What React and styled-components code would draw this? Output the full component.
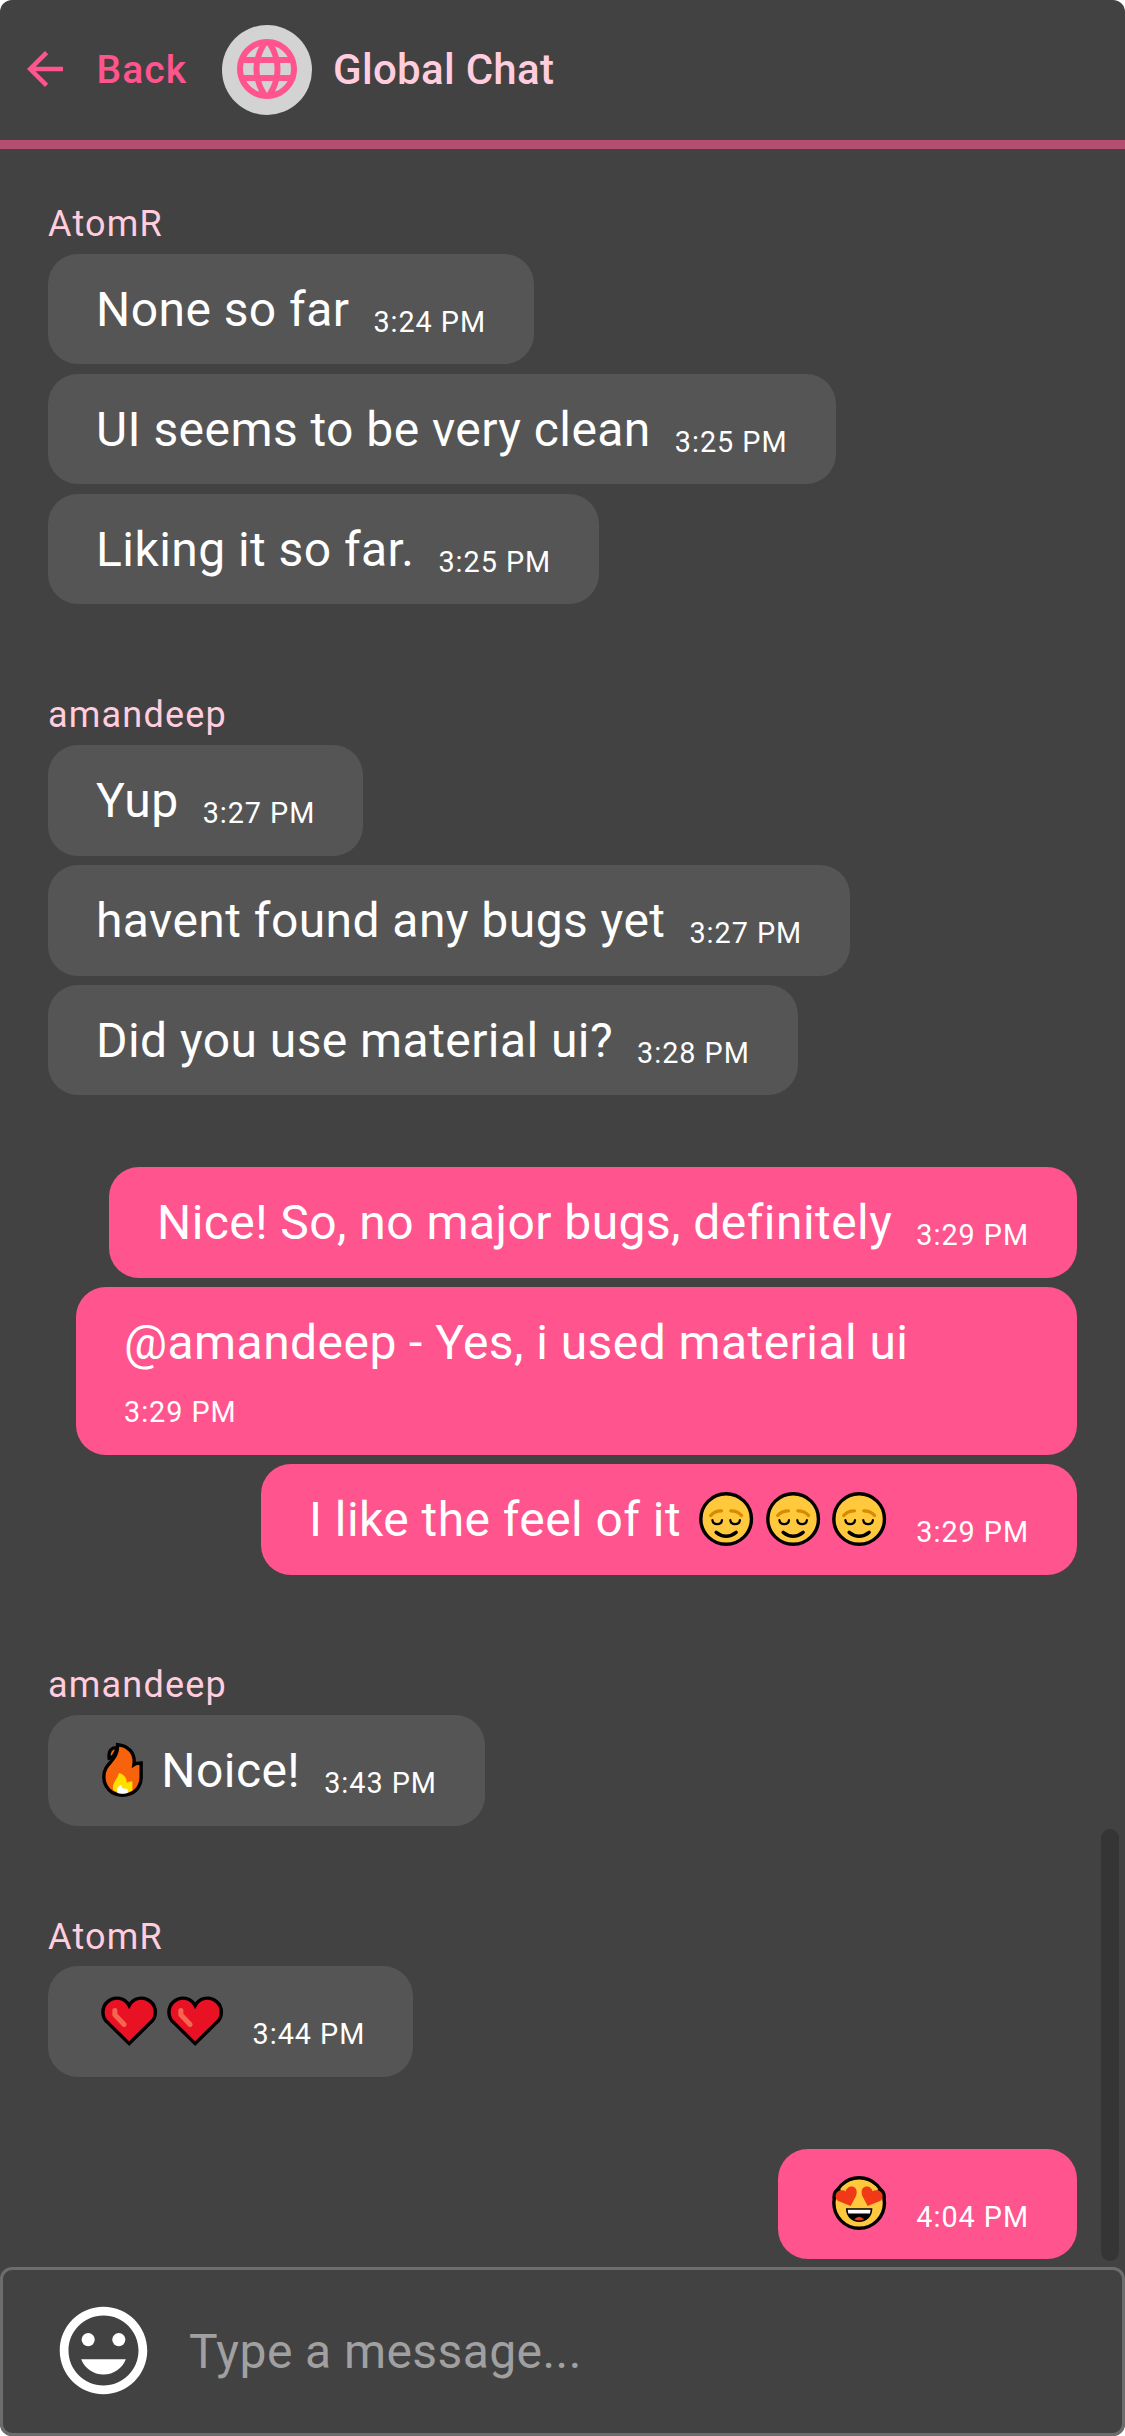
import React from 'react';
import styled, { createGlobalStyle } from 'styled-components';

const GlobalStyle = createGlobalStyle`
  *, *::before, *::after { box-sizing: border-box; }
  body { margin: 0; background: #fff; font-family: Roboto, "Liberation Sans", sans-serif; }
`;

const Screen = styled.main`
  display: flex;
  flex-direction: column;
  width: 1125px;
  height: 2436px;
  overflow: hidden;
  border-radius: 12px;
  background: #424242;
  color: #fff;
`;

const Header = styled.header`
  display: flex;
  align-items: center;
  flex: none;
  height: 149px;
  border-bottom: 9px solid #b34e6f;
  padding-left: 18px;
`;

const BackButton = styled.button`
  display: flex;
  align-items: center;
  gap: 24.5px;
  width: 204px;
  padding: 0;
  border: 0;
  background: none;
  color: #ff548d;
  font: 500 39px/68px Roboto, sans-serif;
  letter-spacing: 1.1px;
  text-align: left;
`;

const Avatar = styled.div`
  display: flex;
  justify-content: center;
  width: 90px;
  height: 90px;
  padding-top: 8px;
  border-radius: 50%;
  background: #d3d3d3;
  color: #ff548d;
`;

const Title = styled.h1`
  margin: 0 0 0 21px;
  color: #ffcdde;
  font-size: 42px;
  font-weight: 500;
  line-height: 66px;
  letter-spacing: 0.3px;
`;

const Icon = styled.svg`
  display: block;
  flex: none;
  width: ${(p) => p.$size}px;
  height: ${(p) => p.$size}px;
  margin-bottom: ${(p) => p.$lift || 0}px;
  fill: currentColor;
`;

const Body = styled.div`
  display: flex;
  flex: 1;
  min-height: 0;
  padding-right: 6px;
`;

const Messages = styled.section`
  display: flex;
  flex-direction: column;
  gap: 71.8px;
  flex: 1;
  padding: 36px 24px 0 48px;
`;

const ScrollThumb = styled.div`
  align-self: flex-end;
  width: 18px;
  height: 432px;
  margin-bottom: 6px;
  border-radius: 9px;
  background: #353535;
`;

const Group = styled.div`
  display: flex;
  flex-direction: column;
  align-items: ${(p) => (p.$own ? 'flex-end' : 'flex-start')};
  gap: 9.6px;
`;

const Sender = styled.div`
  height: 59.4px;
  padding-top: 19px;
  color: #ffcdde;
  font-size: 36px;
  line-height: 40px;
  letter-spacing: 1.2px;
`;

const Bubble = styled.div`
  display: flex;
  flex-wrap: wrap;
  align-items: flex-end;
  column-gap: 24px;
  max-width: 1001px;
  padding: 19.6px 48px 18.8px;
  border-radius: 30px;
  background: ${(p) => (p.$own ? '#ff548d' : '#555555')};
`;

const MessageText = styled.span`
  font-size: 48px;
  line-height: 72px;
  letter-spacing: 0.435px;
  white-space: pre;
`;

const Time = styled.time`
  margin-top: 11.3px;
  font-size: 28.8px;
  line-height: 45.6px;
  letter-spacing: 0.96px;
  white-space: nowrap;
`;

const EmojiSvg = styled.svg`
  display: inline-block;
  width: 66.3px;
  height: 54px;
  margin-right: ${(p) => p.$kern || 0}px;
  vertical-align: -10px;
  overflow: visible;
`;

const Composer = styled.footer`
  display: flex;
  align-items: center;
  flex: none;
  height: 169px;
  padding-left: 48px;
  border: 3px solid #6d6d6d;
  border-radius: 12px;
`;

const MessageInput = styled.input`
  flex: 1;
  height: 72px;
  margin-left: 33px;
  padding: 0;
  border: 0;
  outline: 0;
  background: none;
  color: #fff;
  font: 400 48px/72px Roboto, sans-serif;
  letter-spacing: 0.42px;
  &::placeholder { color: #a0a0a0; opacity: 1; }
`;

const Relieved = () => (
  <EmojiSvg viewBox="0 0 66 54" fill="none" strokeLinecap="round">
    <circle cx="33" cy="27" r="25.3" fill="#ffc83d" stroke="#000" strokeWidth="3.4" />
    <path d="M17.6 23.5Q21.5 18.8 28.3 18.8M37.7 18.8Q44.5 18.8 48.4 23.5" stroke="#d68b00" strokeWidth="3.3" />
    <path d="M19.2 28A4.9 4.9 0 0 0 28.9 28M37.1 28A4.9 4.9 0 0 0 46.8 28" stroke="#000" strokeWidth="2.2" />
    <path d="M23 40.3Q33 48.2 43 40.3" stroke="#000" strokeWidth="3.4" />
  </EmojiSvg>
);

const Heart = () => (
  <EmojiSvg viewBox="0 0 66 54" fill="none" strokeLinecap="round">
    <path d="M33 49.6L12 28.9A13.9 13.9 0 1 1 33 11.6A13.9 13.9 0 1 1 54 28.9Z" fill="#e81224" stroke="#000" strokeWidth="3.4" />
    <path d="M18.7 16.4V20.8L28 30.4" stroke="#f4674f" strokeWidth="5" strokeLinejoin="round" />
  </EmojiSvg>
);

const Fire = () => (
  <EmojiSvg viewBox="0 0 66 54" strokeLinejoin="miter" $kern={-1}>
    <path d="M20.5 4.5C15 4.5 12 8 13 15.5C16 15 20 11 20.5 4.5Z" fill="#f7630c" stroke="#000" strokeWidth="3.2" />
    <path d="M21.5 1.7C32 2.5 39.5 10 37.8 21.5C39.5 20.3 42 20 45 20V34C45 45 37 52.2 26.5 52.2C15.5 52.2 7.7 44.5 7.7 33.5C7.7 19 22 19 21.5 1.7Z" fill="#f7630c" stroke="#000" strokeWidth="3.4" />
    <path d="M23 30C28 31.5 31 35 30.5 39.8C32 38.6 34 38.2 36.2 38.5V47.6Q27 53 17.5 47.6C14.5 42 20.5 37 23 30Z" fill="#ffde00" />
    <path d="M25.5 41.8C24.5 44.5 27 46 28.5 45.5L31.5 46V50Q26.3 51.5 21.3 50C20 46.5 22 42.5 25.5 41.8Z" fill="#fff" />
  </EmojiSvg>
);

const HeartEyes = () => (
  <EmojiSvg viewBox="0 0 66 54">
    <circle cx="33" cy="27" r="25.3" fill="#ffc83d" stroke="#000" strokeWidth="3.4" />
    <path d="M14 12.5Q7.5 15 8 22M52 12.5Q58.5 15 58 22" fill="none" stroke="#000" strokeWidth="3.6" />
    <path d="M24.5 30L11.5 24.7C8 22 9 14.5 15 14.2Q18.5 14 19.5 15.5C20 11 26.5 8.5 29.5 12.5Q31.5 15.5 29.8 20Z" fill="#f03a17" />
    <path d="M41.5 30L54.5 24.7C58 22 57 14.5 51 14.2Q47.5 14 46.5 15.5C46 11 39.5 8.5 36.5 12.5Q34.5 15.5 36.2 20Z" fill="#f03a17" />
    <path d="M19.8 32.2H46.2C46.2 40.5 40.5 46 33 46C25.5 46 19.8 40.5 19.8 32.2Z" fill="#000" />
    <path d="M21.5 33.8H44.5L43.8 37.5H22.2Z" fill="#fff" />
    <path d="M28 43.3Q33 38 38 43.3Q33 45.8 28 43.3Z" fill="#f03a17" />
  </EmojiSvg>
);

const GROUPS = [
  { sender: 'AtomR', items: [['None so far', '3:24 PM'], ['UI seems to be very clean', '3:25 PM'], ['Liking it so far.', '3:25 PM']] },
  { sender: 'amandeep', items: [['Yup', '3:27 PM'], ['havent found any bugs yet', '3:27 PM'], ['Did you use material ui?', '3:28 PM']] },
  {
    own: true,
    items: [
      ['Nice! So, no major bugs, definitely', '3:29 PM'],
      ['@amandeep - Yes, i used material ui', '3:29 PM'],
      [<>I like the feel of it <Relieved /><Relieved /><Relieved /></>, '3:29 PM'],
    ],
  },
  { sender: 'amandeep', items: [[<><Fire />Noice!</>, '3:43 PM']] },
  { sender: 'AtomR', items: [[<><Heart /><Heart /></>, '3:44 PM']] },
  { own: true, items: [[<HeartEyes />, '4:04 PM']] },
];

export default function App() {
  return (
    <>
      <GlobalStyle />
      <Screen>
        <Header>
          <BackButton type="button">
            <Icon $size={54} $lift={2} viewBox="0 0 24 24">
              <path d="M20 11H7.83l5.59-5.59L12 4l-8 8 8 8 1.41-1.41L7.83 13H20v-2z" />
            </Icon>
            Back
          </BackButton>
          <Avatar>
            <Icon $size={72} viewBox="0 0 24 24">
              <path d="M11.99 2C6.47 2 2 6.48 2 12s4.47 10 9.99 10C17.52 22 22 17.52 22 12S17.52 2 11.99 2zm6.93 6h-2.95c-.32-1.25-.78-2.45-1.38-3.56 1.84.63 3.37 1.91 4.33 3.56zM12 4.04c.83 1.2 1.48 2.53 1.91 3.96h-3.82c.43-1.43 1.08-2.76 1.91-3.96zM4.26 14C4.1 13.36 4 12.69 4 12s.1-1.36.26-2h3.38c-.08.66-.14 1.32-.14 2s.06 1.34.14 2H4.26zm.82 2h2.95c.32 1.25.78 2.45 1.38 3.56-1.84-.63-3.37-1.9-4.33-3.56zm2.95-8H5.08c.96-1.66 2.49-2.93 4.33-3.56C8.81 5.55 8.35 6.75 8.03 8zM12 19.96c-.83-1.2-1.48-2.53-1.91-3.96h3.82c-.43 1.43-1.08 2.76-1.91 3.96zM14.34 14H9.66c-.09-.66-.16-1.32-.16-2s.07-1.35.16-2h4.68c.09.65.16 1.32.16 2s-.07 1.34-.16 2zm.25 5.56c.6-1.11 1.06-2.31 1.38-3.56h2.95c-.96 1.65-2.49 2.93-4.33 3.56zM16.36 14c.08-.66.14-1.32.14-2s-.06-1.34-.14-2h3.38c.16.64.26 1.31.26 2s-.1 1.36-.26 2h-3.38z" />
            </Icon>
          </Avatar>
          <Title>Global Chat</Title>
        </Header>
        <Body>
          <Messages>
            {GROUPS.map((group, i) => (
              <Group key={i} $own={group.own}>
                {group.sender && <Sender>{group.sender}</Sender>}
                {group.items.map(([text, time], j) => (
                  <Bubble key={j} $own={group.own}>
                    <MessageText>{text}</MessageText>
                    <Time>{time}</Time>
                  </Bubble>
                ))}
              </Group>
            ))}
          </Messages>
          <ScrollThumb />
        </Body>
        <Composer>
          <Icon $size={105} $lift={2} viewBox="0 0 24 24">
            <path d="M11.99 2C6.47 2 2 6.48 2 12s4.47 10 9.99 10C17.52 22 22 17.52 22 12S17.52 2 11.99 2zM12 20c-4.42 0-8-3.58-8-8s3.58-8 8-8 8 3.58 8 8-3.58 8-8 8z" />
            <circle cx="8.5" cy="9.5" r="1.5" />
            <circle cx="15.5" cy="9.5" r="1.5" />
            <path d="M12 17.5c2.33 0 4.31-1.46 5.11-3.5H6.89c.8 2.04 2.78 3.5 5.11 3.5z" />
          </Icon>
          <MessageInput placeholder="Type a message..." />
        </Composer>
      </Screen>
    </>
  );
}
